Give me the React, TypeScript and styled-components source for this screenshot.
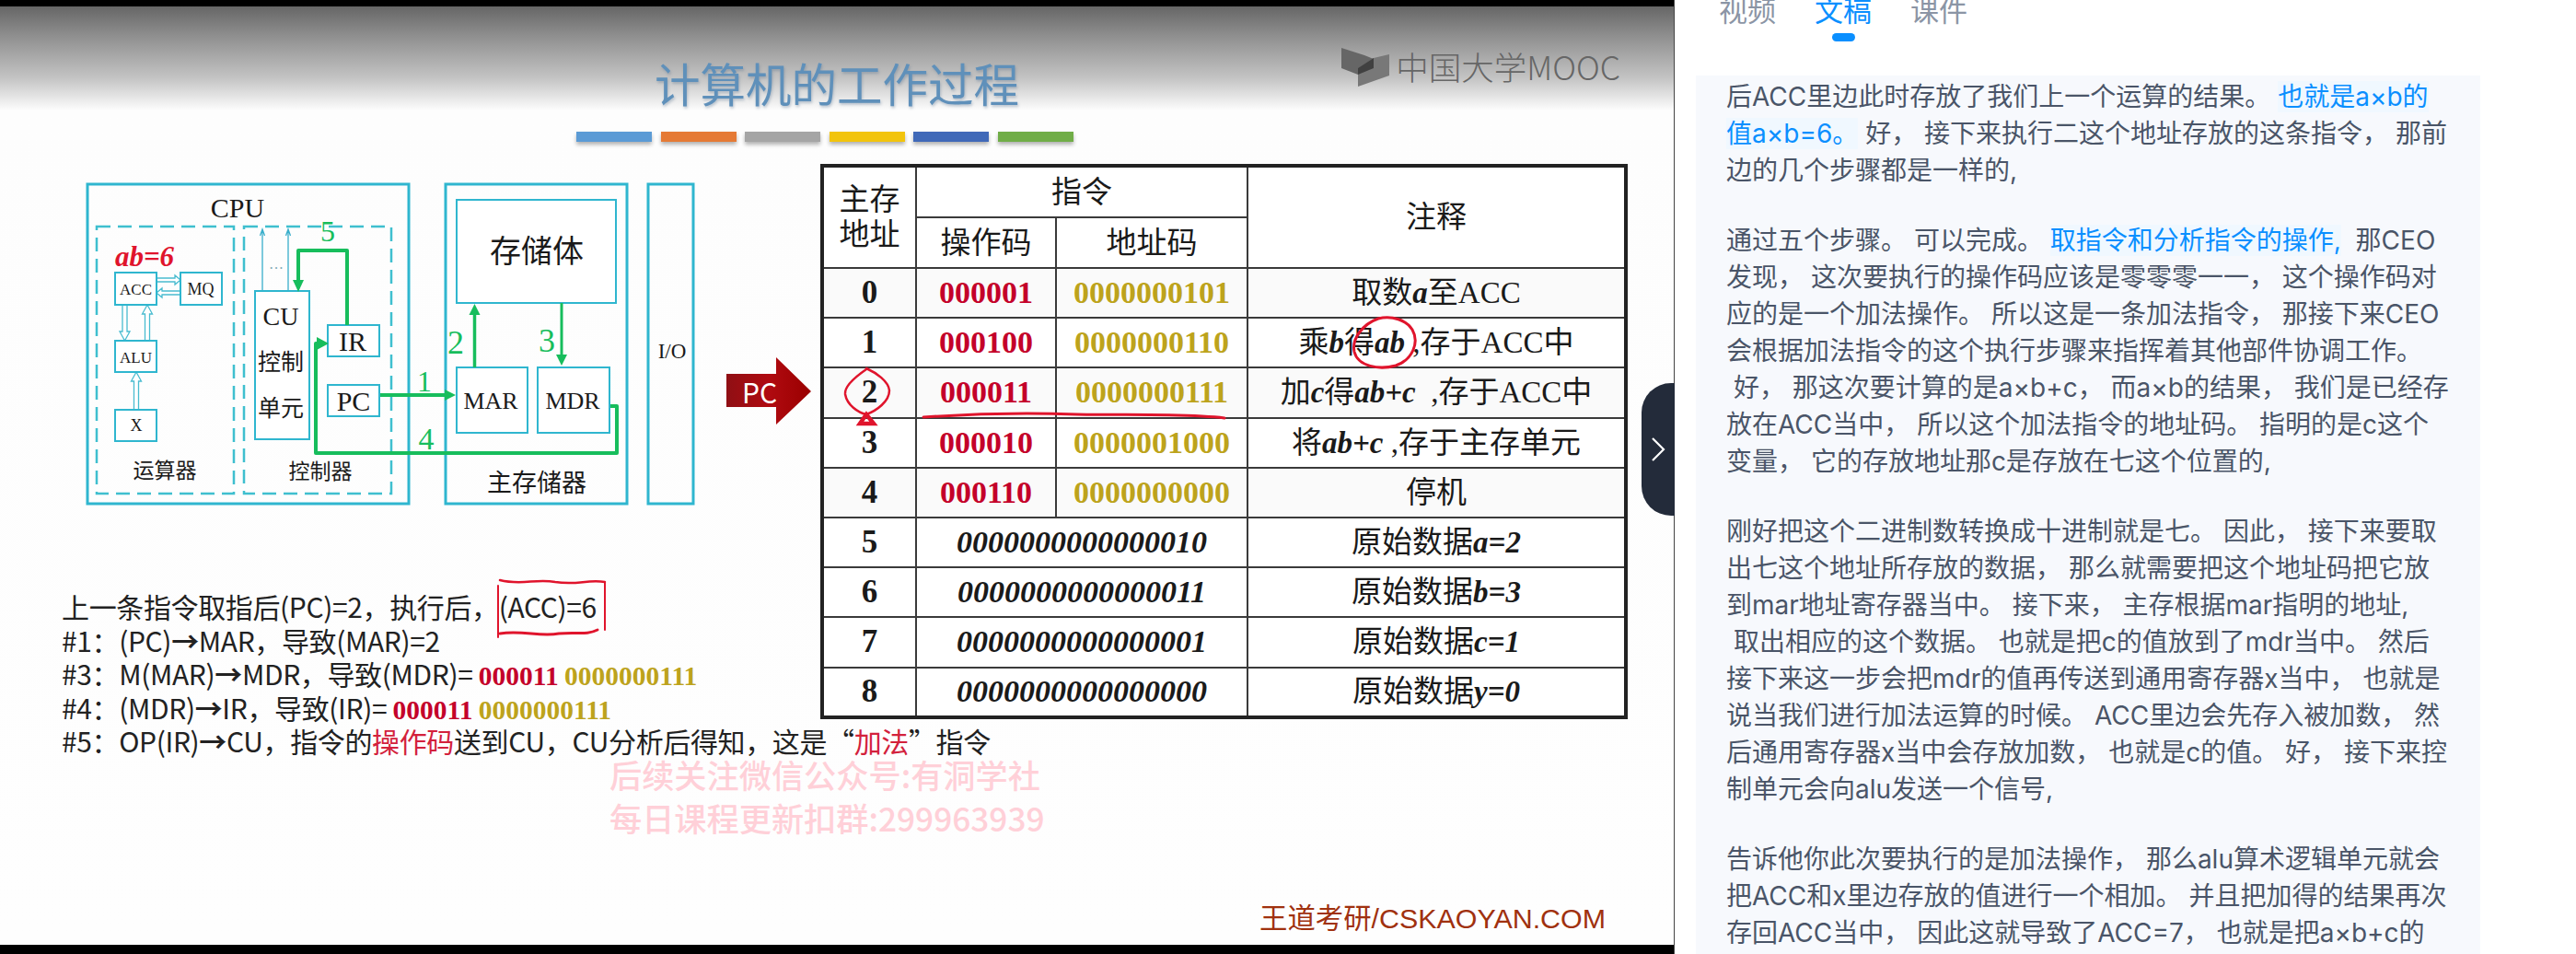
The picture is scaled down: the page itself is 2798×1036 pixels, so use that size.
import React from 'react';
import styled, { createGlobalStyle } from 'styled-components';

const SERIF = '"Liberation Serif", "Noto Sans CJK SC", serif';
const CJK = '"Noto Sans CJK SC", "Noto Sans", sans-serif';
const CYAN = '#2fb6cf';
const GREEN = '#17bd5c';
const RED = '#c4002a';
const GOLD = '#bda31c';
const INK = '#e0142c';

const GlobalStyle = createGlobalStyle`
  html, body {
    margin: 0;
    padding: 0;
    background: #000;
  }
  #root {
    width: 2798px;
    height: 1036px;
    overflow: hidden;
  }
`;

const Page = styled.div`
  position: relative;
  display: flex;
  width: 2798px;
  height: 1036px;
  overflow: hidden;
  background: #fff;
`;

const VideoColumn = styled.div`
  flex: none;
  display: flex;
  width: 1819px;
  padding: 7px 0 10px;
  box-sizing: border-box;
  background: #000;
  border-right: 1px solid #444;
`;

const Slide = styled.div`
  position: relative;
  flex: 1;
  display: flex;
  flex-direction: column;
  background: linear-gradient(180deg, #666 0, #8f8f8f 32px, #c4c4c4 78px, #fdfdfd 113px, #fefefe 100%);
  overflow: hidden;
`;

const Header = styled.div`
  display: flex;
  justify-content: space-between;
  height: 136px;
  padding: 0 58px 0 711px;
`;

const Title = styled.h1`
  margin: 53px 0 0;
  font: 400 49.5px/60px ${CJK};
  color: #5f90ba;
  text-shadow: 1px 2px 3px rgba(80, 110, 140, 0.35);
  white-space: nowrap;
`;

const Logo = styled.div`
  display: flex;
  align-items: flex-start;
  gap: 4px;
  height: 44px;
  margin-top: 45px;
  font: 300 35.5px/40px ${CJK};
  color: #666;
  white-space: nowrap;
`;

const Bars = styled.div`
  display: flex;
  gap: 9.5px;
  padding-left: 626px;
`;

const Bar = styled.div<{ $color: string }>`
  width: 82px;
  height: 11px;
  background: ${p => p.$color};
  box-shadow: 0 3px 4px rgba(0, 0, 0, 0.3);
`;

const Main = styled.div`
  display: flex;
  margin-top: 24px;
`;

const LeftColumn = styled.div`
  flex: none;
  width: 789px;
`;

const DiagramSvg = styled.svg`
  display: block;
  width: 670px;
  height: 360px;
  margin: 17px 0 0 90px;
`;

const Notes = styled.div`
  position: relative;
  margin: 85px 0 0 67px;
  font: 400 30px/36.5px ${CJK};
  letter-spacing: -0.37px;
  color: #222;
  white-space: nowrap;
`;

const NoteLine = styled.div`
  height: 36.5px;
`;

const NoteCode = styled.b<{ $color: string }>`
  font: 700 29.5px/36px ${SERIF};
  letter-spacing: 0;
  color: ${p => p.$color};
`;

const NoteRed = styled.span`
  color: #d3213c;
`;

const NoteArrow = styled.b`
  font-weight: 700;
`;

const AccMark = styled.svg`
  position: absolute;
  left: 470px;
  top: -14px;
  width: 130px;
  height: 72px;
`;

const PcArrow = styled.svg`
  flex: none;
  display: block;
  width: 92px;
  height: 74px;
  margin: 210px 10px 0 0;
`;

const TableWrap = styled.div`
  position: relative;
  flex: none;
  width: 873px;
  height: 599px;
`;

const Table = styled.table`
  width: 873px;
  height: 599px;
  table-layout: fixed;
  border-collapse: collapse;
  border: 4px solid #222;
  font: 400 33px/38px ${SERIF};
  color: #1a1a1a;
  background: #fff;
`;

const Cell = styled.td<{ $color?: string; $tint?: boolean }>`
  padding: 0;
  border: 2px solid #3a3a3a;
  text-align: center;
  white-space: nowrap;
  color: ${p => p.$color ?? 'inherit'};
  background: ${p => (p.$tint ? '#fafafa' : 'transparent')};
`;

const Row = styled.tr<{ $height: number }>`
  height: ${p => p.$height}px;
`;

const Addr = styled(Cell)`
  font-weight: 700;
  font-size: 35px;
`;

const Code = styled(Cell)`
  font-weight: 700;
  font-size: 34px;
`;

const DataCode = styled(Cell)`
  font-weight: 700;
  font-style: italic;
  font-size: 34px;
`;

const Em = styled.i`
  font-weight: 700;
`;

const MarkLayer = styled.svg`
  position: absolute;
  left: 0;
  top: 0;
  width: 873px;
  height: 599px;
  pointer-events: none;
`;

const Watermark = styled.div`
  position: absolute;
  left: 662px;
  top: 810px;
  font: 500 35.2px/47px ${CJK};
  color: #ffd0d8;
  white-space: nowrap;
`;

const Footer = styled.div`
  margin-top: auto;
  padding: 0 74px 14px 0;
  text-align: right;
  font: 400 30.4px/30px "Liberation Sans", ${CJK};
  color: #a0310f;
`;

const Handle = styled.div`
  position: absolute;
  left: 1783px;
  top: 416px;
  display: flex;
  align-items: center;
  justify-content: center;
  width: 36px;
  height: 144px;
  border-radius: 32px 0 0 32px;
  background: #232b3a;
`;

const Side = styled.aside`
  flex: 1;
  display: flex;
  flex-direction: column;
  height: 1036px;
  overflow: hidden;
  background: #fff;
`;

const Tabs = styled.div`
  display: flex;
  gap: 42px;
  margin-top: -10px;
  padding-left: 48px;
`;

const Tab = styled.div<{ $active?: boolean }>`
  display: flex;
  flex-direction: column;
  align-items: center;
  font: 400 31px/40px ${CJK};
  color: ${p => (p.$active ? '#0a8fff' : '#8b95a5')};

  &::after {
    content: '';
    width: 25px;
    height: 9px;
    margin-top: 6px;
    border-radius: 5px;
    background: ${p => (p.$active ? '#0a8fff' : 'transparent')};
  }
`;

const Transcript = styled.div`
  flex: 1;
  width: 819px;
  margin: 37px 0 0 23px;
  padding: 3px 0 0 33px;
  background: #f7f9fd;
  font: 400 28px/40px Inter, ${CJK};
  color: #4a5568;
`;

const Paragraph = styled.p`
  margin: 0 0 36px;
`;

const Line = styled.div`
  height: 40px;
  white-space: pre;
`;

const Current = styled.span`
  color: #0a8fff;
  background: #f0f8ff;
`;

const DiagramText = styled.text<{ $size: number; $color?: string; $serif?: boolean }>`
  font-family: ${p => (p.$serif ? SERIF : CJK)};
  font-size: ${p => p.$size}px;
  fill: ${p => p.$color ?? '#1a1a1a'};
  text-anchor: middle;
  dominant-baseline: central;
`;

const Box = styled.rect<{ $weight?: number }>`
  fill: ${p => (p.$weight ? 'none' : '#fff')};
  stroke: ${CYAN};
  stroke-width: ${p => p.$weight ?? 2}px;
`;

const Dashed = styled.rect`
  fill: none;
  stroke: #3fbfcf;
  stroke-width: 2.5px;
  stroke-dasharray: 15 8;
`;

const GreenLine = styled.path<{ $width?: number }>`
  fill: none;
  stroke: ${GREEN};
  stroke-width: ${p => p.$width ?? 4}px;
  stroke-linejoin: round;
`;

const GreenHead = styled.polygon`
  fill: ${GREEN};
`;

const HollowArrow = styled.polygon`
  fill: #fff;
  stroke: #49bcd0;
  stroke-width: 1.3px;
`;

const ThinLine = styled.path`
  fill: none;
  stroke: #39aecb;
  stroke-width: 1.3px;
`;

const InkStroke = styled.path<{ $width?: number }>`
  fill: none;
  stroke: ${INK};
  stroke-width: ${p => p.$width ?? 3}px;
  stroke-linecap: round;
`;

const BAR_COLORS = ['#5b9bd5', '#e57a35', '#a5a5a5', '#f2c40c', '#4069b8', '#70ad47'];

const Diagram = () => (
  <DiagramSvg viewBox="90 195 670 360">
    <Box x={95} y={200} width={349} height={347} $weight={3} />
    <Box x={484} y={200} width={197} height={347} $weight={3} />
    <Box x={704} y={200} width={49} height={347} $weight={3} />
    <Dashed x={105} y={246} width={149} height={290} />
    <Dashed x={265} y={246} width={160} height={290} />
    <DiagramText x={258} y={225} $size={30} $serif>CPU</DiagramText>

    <HollowArrow points="170,302 190,302 190,299 196,304 190,309 190,306 170,306" />
    <HollowArrow points="196,316 176,316 176,313 170,318 176,323 176,320 196,320" />
    <HollowArrow points="133,331 138,331 138,360 141,360 135.5,370 130,360 133,360" />
    <HollowArrow points="157.5,370 162.5,370 162.5,341 165.5,341 160,331 154.5,341 157.5,341" />
    <HollowArrow points="145.5,445 150.5,445 150.5,414 153.5,414 148,404 142.5,414 145.5,414" />

    <Box x={125} y={296} width={45} height={35} />
    <DiagramText x={147.5} y={314} $size={17} $serif>ACC</DiagramText>
    <Box x={196} y={296} width={45} height={35} />
    <DiagramText x={218} y={314} $size={18} $serif>MQ</DiagramText>
    <Box x={125} y={370} width={45} height={34} />
    <DiagramText x={147.5} y={388} $size={17} $serif>ALU</DiagramText>
    <Box x={125} y={445} width={45} height={34} />
    <DiagramText x={148} y={462} $size={18} $serif>X</DiagramText>
    <DiagramText x={179} y={509} $size={23}>运算器</DiagramText>
    <DiagramText x={157} y={278} $size={31} $color={INK} $serif fontStyle="italic" fontWeight="700">ab=6</DiagramText>

    <ThinLine d="M285 316V250M282.5 256L285 249L287.500 256M313 316V250M310.500 256L313 249L315.500 256" />
    <DiagramText x={300} y={286} $size={16} $color="#7fa8b4" $serif>…</DiagramText>
    <Box x={277} y={316} width={59} height={161} />
    <DiagramText x={305} y={343} $size={28} $serif>CU</DiagramText>
    <DiagramText x={305} y={391} $size={25}>控制</DiagramText>
    <DiagramText x={305} y={441} $size={25}>单元</DiagramText>
    <Box x={356} y={353} width={56} height={34} />
    <DiagramText x={383} y={370} $size={30} $serif>IR</DiagramText>
    <Box x={356} y={418} width={56} height={34} />
    <DiagramText x={384} y={435} $size={30} $serif>PC</DiagramText>
    <DiagramText x={348} y={510} $size={23}>控制器</DiagramText>

    <Box x={496} y={217} width={173} height={112} />
    <DiagramText x={583} y={270} $size={34}>存储体</DiagramText>
    <Box x={496} y={399} width={77} height={71} />
    <DiagramText x={533} y={435} $size={26} $serif>MAR</DiagramText>
    <Box x={584} y={399} width={78} height={71} />
    <DiagramText x={622} y={435} $size={26} $serif>MDR</DiagramText>
    <DiagramText x={583} y={522} $size={27}>主存储器</DiagramText>
    <DiagramText x={730} y={381} $size={23} $serif>I/O</DiagramText>

    <GreenLine d="M377 353V272H324V306" />
    <GreenHead points="318,304 330,304 324,317" />
    <GreenLine d="M663 441H670V492H343V373H346" />
    <GreenHead points="344,366 344,380 357,373" />
    <GreenLine d="M413 429H484" />
    <GreenHead points="483,423 483,435 495,429" />
    <GreenLine d="M515.500 399V340" $width={3.5} />
    <GreenHead points="509.500,342 521.500,342 515.500,330" />
    <GreenLine d="M610 329V386" $width={3} />
    <GreenHead points="604,385 616,385 610,397" />

    <DiagramText x={356} y={251} $size={32} $color={GREEN} $serif>5</DiagramText>
    <DiagramText x={461} y={414} $size={32} $color={GREEN} $serif>1</DiagramText>
    <DiagramText x={495} y={372} $size={36} $color={GREEN} $serif>2</DiagramText>
    <DiagramText x={594} y={370} $size={36} $color={GREEN} $serif>3</DiagramText>
    <DiagramText x={463} y={476} $size={34} $color={GREEN} $serif>4</DiagramText>
  </DiagramSvg>
);

const PcPointer = () => (
  <PcArrow viewBox="0 0 92 74">
    <defs>
      <linearGradient id="pcFill" x1="0" y1="0" x2="1" y2="0">
        <stop offset="0" stopColor="#8f0f14" />
        <stop offset="0.5" stopColor="#b00a10" />
        <stop offset="1" stopColor="#9a0000" />
      </linearGradient>
    </defs>
    <polygon points="0,18 54,18 54,0 92,37 54,73 54,54 0,54" fill="url(#pcFill)" />
    <text
      x="36"
      y="37"
      fill="#fff"
      fontFamily={CJK}
      fontSize="30"
      textAnchor="middle"
      dominantBaseline="central"
    >
      PC
    </text>
  </PcArrow>
);

const ROWS: { addr: string; op: string; operand: string; note: React.ReactNode }[] = [
  { addr: '0', op: '000001', operand: '0000000101', note: <>取数<Em>a</Em>至ACC</> },
  { addr: '1', op: '000100', operand: '0000000110', note: <>乘<Em>b</Em>得<Em>ab</Em> ,存于ACC中</> },
  { addr: '2', op: '000011', operand: '0000000111', note: <>加<Em>c</Em>得<Em>ab+c</Em> &nbsp;,存于ACC中</> },
  { addr: '3', op: '000010', operand: '0000001000', note: <>将<Em>ab+c</Em> ,存于主存单元</> },
  { addr: '4', op: '000110', operand: '0000000000', note: <>停机</> },
];

const DATA_ROWS: { addr: string; value: string; note: React.ReactNode }[] = [
  { addr: '5', value: '0000000000000010', note: <>原始数据<Em>a=2</Em></> },
  { addr: '6', value: '0000000000000011', note: <>原始数据<Em>b=3</Em></> },
  { addr: '7', value: '0000000000000001', note: <>原始数据<Em>c=1</Em></> },
  { addr: '8', value: '0000000000000000', note: <>原始数据<Em>y=0</Em></> },
];

const ProgramTable = () => (
  <TableWrap>
    <Table>
      <colgroup>
        <col width={102} />
        <col width={152} />
        <col width={208} />
        <col width={411} />
      </colgroup>
      <tbody>
        <Row $height={56}>
          <Cell rowSpan={2}>主存<br />地址</Cell>
          <Cell colSpan={2}>指令</Cell>
          <Cell rowSpan={2}>注释</Cell>
        </Row>
        <Row $height={55}>
          <Cell>操作码</Cell>
          <Cell>地址码</Cell>
        </Row>
        {ROWS.map((row, i) => (
          <Row key={row.addr} $height={54.2}>
            <Addr $tint={i % 2 === 0}>{row.addr}</Addr>
            <Code $color={RED} $tint={i % 2 === 0}>{row.op}</Code>
            <Code $color={GOLD} $tint={i % 2 === 0}>{row.operand}</Code>
            <Cell $tint={i % 2 === 0}>{row.note}</Cell>
          </Row>
        ))}
        {DATA_ROWS.map(row => (
          <Row key={row.addr} $height={54.2}>
            <Addr>{row.addr}</Addr>
            <DataCode colSpan={2}>{row.value}</DataCode>
            <Cell>{row.note}</Cell>
          </Row>
        ))}
      </tbody>
    </Table>
    <MarkLayer viewBox="891 178 873 599">
      <InkStroke d="M1497 346C1480 352 1468 368 1471 382C1475 398 1498 402 1516 397C1534 391 1542 372 1534 358C1528 348 1512 342 1497 346Z" />
      <InkStroke d="M941 401C928 410 917 420 918 428C920 440 932 448 941 450C952 446 966 436 966 424C965 414 952 405 941 400" $width={2.5} />
      <InkStroke d="M1003 453C1060 449 1110 448 1170 450C1230 451 1290 449 1330 454" />
      <InkStroke d="M941 450L934 460H949Z" $width={4.500} />
    </MarkLayer>
  </TableWrap>
);

const Paragraphs: React.ReactNode[][] = [
  [
    <>后ACC里边此时存放了我们上一个运算的结果。 <Current>也就是a×b的</Current></>,
    <><Current>值a×b=6。</Current> 好， 接下来执行二这个地址存放的这条指令， 那前</>,
    '边的几个步骤都是一样的,',
  ],
  [
    <>通过五个步骤。 可以完成。 <Current>取指令和分析指令的操作,</Current>  那CEO</>,
    '发现， 这次要执行的操作码应该是零零零一一， 这个操作码对',
    '应的是一个加法操作。 所以这是一条加法指令， 那接下来CEO',
    '会根据加法指令的这个执行步骤来指挥着其他部件协调工作。',
    ' 好， 那这次要计算的是a×b+c， 而a×b的结果， 我们是已经存',
    '放在ACC当中， 所以这个加法指令的地址码。 指明的是c这个',
    '变量， 它的存放地址那c是存放在七这个位置的,',
  ],
  [
    '刚好把这个二进制数转换成十进制就是七。 因此， 接下来要取',
    '出七这个地址所存放的数据， 那么就需要把这个地址码把它放',
    '到mar地址寄存器当中。 接下来， 主存根据mar指明的地址,',
    ' 取出相应的这个数据。 也就是把c的值放到了mdr当中。 然后',
    '接下来这一步会把mdr的值再传送到通用寄存器x当中， 也就是',
    '说当我们进行加法运算的时候。 ACC里边会先存入被加数， 然',
    '后通用寄存器x当中会存放加数， 也就是c的值。 好， 接下来控',
    '制单元会向alu发送一个信号,',
  ],
  [
    '告诉他你此次要执行的是加法操作， 那么alu算术逻辑单元就会',
    '把ACC和x里边存放的值进行一个相加。 并且把加得的结果再次',
    '存回ACC当中， 因此这就导致了ACC=7， 也就是把a×b+c的',
  ],
];

export default function App() {
  return (
    <Page>
      <GlobalStyle />
      <VideoColumn>
        <Slide>
          <Header>
            <Title>计算机的工作过程</Title>
            <Logo>
              <svg width="55" height="42" viewBox="0 0 55 42">
                <polygon points="0,0 25,8 35,12 18,29 0,22" fill="#666" />
                <polygon points="18,42 18,22 35,11 52,7 52,30" fill="#787878" />
                <polygon points="18,22 35,11 35,22 18,29" fill="#404040" />
              </svg>
              <span>中国大学MOOC</span>
            </Logo>
          </Header>
          <Bars>
            {BAR_COLORS.map(color => (
              <Bar key={color} $color={color} />
            ))}
          </Bars>
          <Main>
            <LeftColumn>
              <Diagram />
              <Notes>
                <NoteLine>上一条指令取指后(PC)=2，执行后，(ACC)=6</NoteLine>
                <NoteLine>#1：(PC)<NoteArrow>→</NoteArrow>MAR，导致(MAR)=2</NoteLine>
                <NoteLine>
                  #3：M(MAR)<NoteArrow>→</NoteArrow>MDR，导致(MDR)= <NoteCode $color={RED}>000011</NoteCode>{' '}
                  <NoteCode $color={GOLD}>0000000111</NoteCode>
                </NoteLine>
                <NoteLine>
                  #4：(MDR)<NoteArrow>→</NoteArrow>IR，导致(IR)= <NoteCode $color={RED}>000011</NoteCode>{' '}
                  <NoteCode $color={GOLD}>0000000111</NoteCode>
                </NoteLine>
                <NoteLine>
                  #5：OP(IR)<NoteArrow>→</NoteArrow>CU，指令的<NoteRed>操作码</NoteRed>送到CU，CU分析后得知，这是“<NoteRed>加法</NoteRed>”指令
                </NoteLine>
                <AccMark viewBox="0 0 130 72">
                  <InkStroke d="M6 4C30 10 45 2 66 6C90 10 100 3 120 6" $width={2.5} />
                  <InkStroke d="M4 10V66M120 6V58" $width={2} />
                  <InkStroke d="M6 62C30 58 50 66 70 62C90 60 100 64 112 58" $width={3} />
                </AccMark>
              </Notes>
            </LeftColumn>
            <PcPointer />
            <ProgramTable />
          </Main>
          <Watermark>
            后续关注微信公众号:有洞学社
            <br />
            每日课程更新扣群:299963939
          </Watermark>
          <Footer>王道考研/CSKAOYAN.COM</Footer>
        </Slide>
      </VideoColumn>
      <Handle>
        <svg width="16" height="28" viewBox="0 0 16 28">
          <polyline points="2,2 14,14 2,26" fill="none" stroke="#fff" strokeWidth="2.2" />
        </svg>
      </Handle>
      <Side>
        <Tabs>
          <Tab>视频</Tab>
          <Tab $active>文稿</Tab>
          <Tab>课件</Tab>
        </Tabs>
        <Transcript>
          {Paragraphs.map((lines, i) => (
            <Paragraph key={i}>
              {lines.map((line, j) => (
                <Line key={j}>{line}</Line>
              ))}
            </Paragraph>
          ))}
        </Transcript>
      </Side>
    </Page>
  );
}
